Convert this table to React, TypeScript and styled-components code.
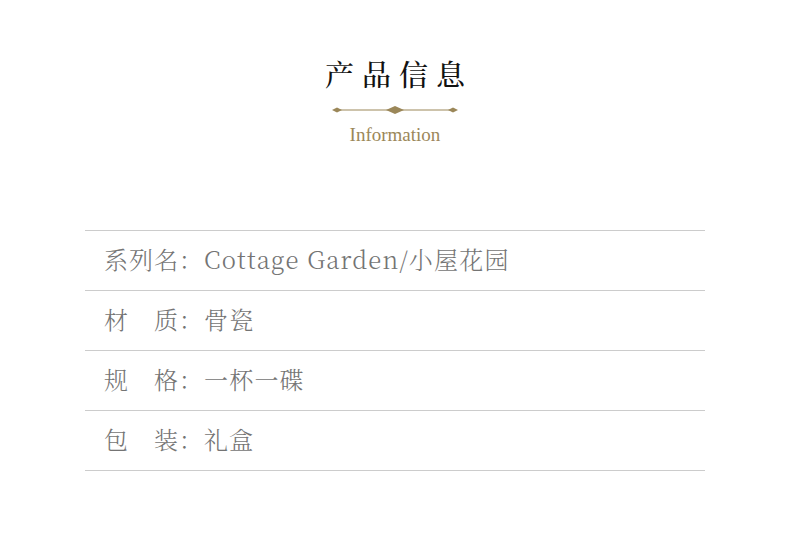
import React from "react";
import styled, { createGlobalStyle } from "styled-components";

const GlobalStyle = createGlobalStyle`
  html, body {
    margin: 0;
    padding: 0;
    background: #ffffff;
  }
`;

const specs = [
  { label: "系列名：", value: "Cottage Garden/小屋花园" },
  { label: "材　质：", value: "骨瓷" },
  { label: "规　格：", value: "一杯一碟" },
  { label: "包　装：", value: "礼盒" },
];

const Ornament: React.FC = () => (
  <OrnamentSvg width="126" height="10" viewBox="0 0 126 10">
    <line x1="2" y1="5" x2="124" y2="5" stroke="#9b8759" strokeWidth="1" />
    <polygon points="0,5 5,2.6 10,5 5,7.4" fill="#9b8759" />
    <polygon points="116,5 121,2.6 126,5 121,7.4" fill="#9b8759" />
    <polygon points="54,5 63,1 72,5 63,9" fill="#9b8759" />
  </OrnamentSvg>
);

const App: React.FC = () => {
  return (
    <>
      <GlobalStyle />
      <Page>
        <Header>
          <Title>产品信息</Title>
          <Ornament />
          <Subtitle>Information</Subtitle>
        </Header>
        <SpecTable>
          {specs.map((row) => (
            <SpecRow key={row.label}>
              <Label>{row.label}</Label>
              <Value>{row.value}</Value>
            </SpecRow>
          ))}
        </SpecTable>
      </Page>
    </>
  );
};

const Page = styled.div`
  width: 790px;
  height: 547px;
  background: #ffffff;
  overflow: hidden;
`;

const Header = styled.header`
  display: flex;
  flex-direction: column;
  align-items: center;
  padding-top: 60px;
`;

const Title = styled.h1`
  margin: 0;
  font-family: "Noto Serif CJK SC", "Noto Sans CJK SC", serif;
  font-size: 29px;
  line-height: 28px;
  font-weight: 500;
  letter-spacing: 8px;
  padding-left: 8px;
  color: #111111;
`;

const OrnamentSvg = styled.svg`
  display: block;
  margin-top: 17px;
`;

const Subtitle = styled.div`
  margin-top: 10px;
  font-family: "Liberation Serif", serif;
  font-size: 19px;
  line-height: 19px;
  color: #9b8759;
`;

const SpecTable = styled.div`
  width: 620px;
  margin: 86px auto 0;
  border-top: 1px solid #cccccc;
`;

const SpecRow = styled.div`
  display: flex;
  align-items: center;
  height: 56px;
  padding: 0 0 3px 19px;
  border-bottom: 1px solid #cccccc;
  font-family: "Noto Serif CJK SC", "Liberation Serif", serif;
  font-weight: 300;
  font-size: 24px;
  line-height: 30px;
  color: #747474;
`;

const Label = styled.span`
  letter-spacing: 1px;
  white-space: pre;
`;

const Value = styled.span`
  letter-spacing: 1.2px;
`;

export default App;
